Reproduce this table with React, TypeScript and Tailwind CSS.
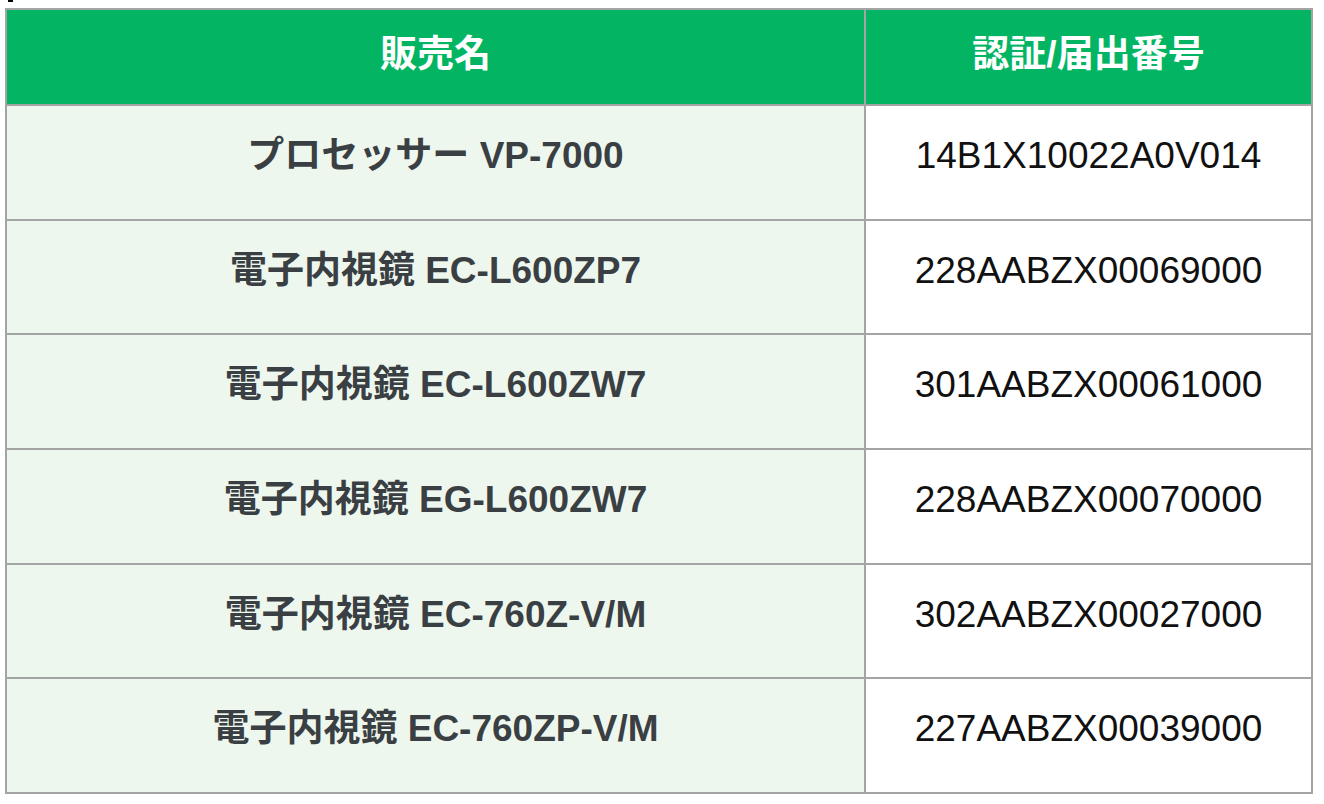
import { Fragment } from "react";

const rows = [
  { name: "プロセッサー VP-7000", code: "14B1X10022A0V014" },
  { name: "電子内視鏡 EC-L600ZP7", code: "228AABZX00069000" },
  { name: "電子内視鏡 EC-L600ZW7", code: "301AABZX00061000" },
  { name: "電子内視鏡 EG-L600ZW7", code: "228AABZX00070000" },
  { name: "電子内視鏡 EC-760Z-V/M", code: "302AABZX00027000" },
  { name: "電子内視鏡 EC-760ZP-V/M", code: "227AABZX00039000" },
];

export default function App() {
  return (
    <div className="w-[1324px] h-[804px] bg-white font-['Liberation_Sans','Noto_Sans_CJK_JP',sans-serif]">
      <div className="ml-[8px] h-[2px] w-[5px] bg-black" />
      <div className="ml-[5px] mt-[6px] w-[1308px] h-[786px] border-2 border-[#a4a4a4] bg-[#a4a4a4] grid grid-cols-[857px_1fr] grid-rows-[94px_repeat(6,1fr)] gap-[2px]">
        <div className="bg-[#03b563] flex items-center justify-center pb-[4px] text-white font-bold text-[37px]">
          販売名
        </div>
        <div className="bg-[#03b563] flex items-center justify-center pb-[4px] text-white font-bold text-[37px]">
          認証/届出番号
        </div>
        {rows.map((row) => (
          <Fragment key={row.code}>
            <div className="bg-[#eef7ee] flex items-center justify-center pb-[13px] text-[#3a3f43] font-bold text-[37px]">
              {row.name}
            </div>
            <div className="bg-white flex items-center justify-center pb-[13px] text-[#111] text-[37px]">
              {row.code}
            </div>
          </Fragment>
        ))}
      </div>
    </div>
  );
}
